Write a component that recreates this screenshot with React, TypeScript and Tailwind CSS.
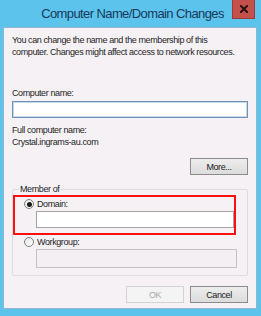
const font = { fontFamily: '"Liberation Sans", Arial, sans-serif' }

function Radio({ checked }: { checked?: boolean }) {
  return (
    <span className="w-[10px] h-[10px] rounded-full border border-[#7f7f7f] bg-gradient-to-br from-[#e4e4e4] to-white flex items-center justify-center shrink-0">
      {checked && <span className="w-[5px] h-[5px] rounded-full bg-[#1a1a1a]" />}
    </span>
  )
}

function Button({ label, disabled }: { label: string; disabled?: boolean }) {
  return (
    <div
      className={
        disabled
          ? 'w-[58px] h-[17px] border border-[#d3d3d3] bg-[#f4f4f4] text-[#a8a8a8] flex items-center justify-center'
          : 'w-[58px] h-[17px] border border-[#8c8c8c] bg-gradient-to-b from-[#ededed] to-[#dcdcdc] text-[#1a1a1a] flex items-center justify-center'
      }
    >
      {label}
    </div>
  )
}

export default function App() {
  return (
    <div className="w-[261px] h-[316px] bg-[#5cc4ec] flex flex-col text-[9px] leading-[12px] tracking-[-0.4px] text-[#1e1e1e]" style={font}>
      {/* Title bar */}
      <div className="h-[27px] relative flex items-center justify-center">
        <span className="text-[13px] tracking-[-0.6px] text-[#17395c] pl-[4px] whitespace-nowrap">Computer Name/Domain Changes</span>
        <div className="absolute right-[6px] top-0 w-[23px] h-[19px] bg-[#c4504b] border border-[#9e3b38] border-t-0 flex items-center justify-center">
          <svg width="8" height="8" viewBox="0 0 8 8">
            <path d="M1 1 L7 7 M7 1 L1 7" stroke="#2a1212" strokeWidth="2" strokeLinecap="square" />
          </svg>
        </div>
      </div>

      {/* Client area */}
      <div className="ml-[3px] mr-[4px] mb-[7px] flex-1 bg-[#f5f1f5] border border-[#8fb8cc] pt-[6px] pl-[8px] pr-[8px] flex flex-col">
        <p className="whitespace-nowrap">
          You can change the name and the membership of this
          <br />
          computer. Changes might affect access to network resources.
        </p>

        <div className="mt-[29px]">Computer name:</div>
        <div className="mt-[2px] h-[17px] bg-white border border-[#6f93b8] shadow-[inset_0_0_0_1px_#c6d8ea]" />

        <div className="mt-[6px]">Full computer name:</div>
        <div>Crystal.ingrams-au.com</div>

        <div className="mt-[10px] flex justify-end">
          <Button label="More..." />
        </div>

        {/* Member of */}
        <div className="mt-[14px] relative border border-[#dcdde3] rounded-[2px] pt-[5px] pb-[7px] pr-[11px]">
          <span className="absolute left-[6px] top-[-7px] px-[1px] bg-[#f5f1f5]">Member of</span>

          <div className="border-2 border-[#ff1010] pl-[9px] pt-[1px] pb-[5px]">
            <div className="flex items-center h-[12px] gap-[3px]">
              <Radio checked />
              <span>Domain:</span>
            </div>
            <div className="ml-[12px] mt-[1px] h-[17px] bg-white border border-[#a5a5a5]" />
          </div>

          <div className="pl-[11px] mt-[1px]">
            <div className="flex items-center h-[12px] gap-[3px]">
              <Radio />
              <span>Workgroup:</span>
            </div>
            <div className="ml-[12px] mt-[1px] mr-[-1px] h-[19px] bg-[#f3eff3] border border-[#c2c2c2]" />
          </div>
        </div>

        <div className="mt-[10px] flex justify-end gap-[6px]">
          <Button label="OK" disabled />
          <Button label="Cancel" />
        </div>
      </div>
    </div>
  )
}
